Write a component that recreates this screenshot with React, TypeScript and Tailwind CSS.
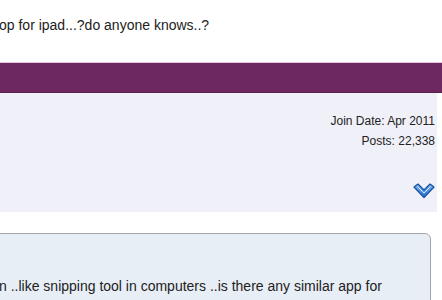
import React from "react";

const Chevron = () => {
  return (
    <svg width="22" height="16" viewBox="0 0 22 16">
      <defs>
        <linearGradient id="chev" x1="0" y1="0" x2="0" y2="1">
          <stop offset="0" stopColor="#7fb8f5" />
          <stop offset="1" stopColor="#1f6fd6" />
        </linearGradient>
      </defs>
      <path
        d="M1 4 L5 1 L11 7 L17 1 L21 4 L11 14.5 Z"
        fill="url(#chev)"
        stroke="#1b4f9e"
        strokeWidth="1.2"
        strokeLinejoin="round"
      />
      <path d="M4.5 3.5 L11 10 L17.5 3.5" fill="none" stroke="#d6e8fb" strokeWidth="1" />
    </svg>
  );
};

export default function App() {
  return (
    <div className="w-[442px] h-[300px] overflow-hidden bg-white font-['Liberation_Sans',Arial,sans-serif] text-[#222]">
      <div className="h-[62px] pt-[15px] text-[14px] leading-[20px] -ml-[1px]">
        op for ipad...?do anyone knows..?
      </div>

      <div className="h-[31px] bg-[#6e2861] border-t border-t-[#e7c6dd] border-b border-b-[#56204c]" />

      <div className="h-[119px] mr-[5px] bg-[#eff0f8] flex flex-col items-end pr-[2px] pt-[18px] text-[12px] leading-[20px]">
        <div>Join Date: Apr 2011</div>
        <div>Posts: 22,338</div>
        <div className="mt-[32px] mr-[0px]">
          <Chevron />
        </div>
      </div>

      <div className="h-[21px]" />

      <div className="-ml-[10px] w-[441px] h-[90px] bg-[#e8eef6] border border-[#a3a7ad] rounded-tr-[6px] pt-[42px] pl-[8px] text-[14px] leading-[20px]">
        n ..like snipping tool in computers ..is there any similar app for
      </div>
    </div>
  );
}
